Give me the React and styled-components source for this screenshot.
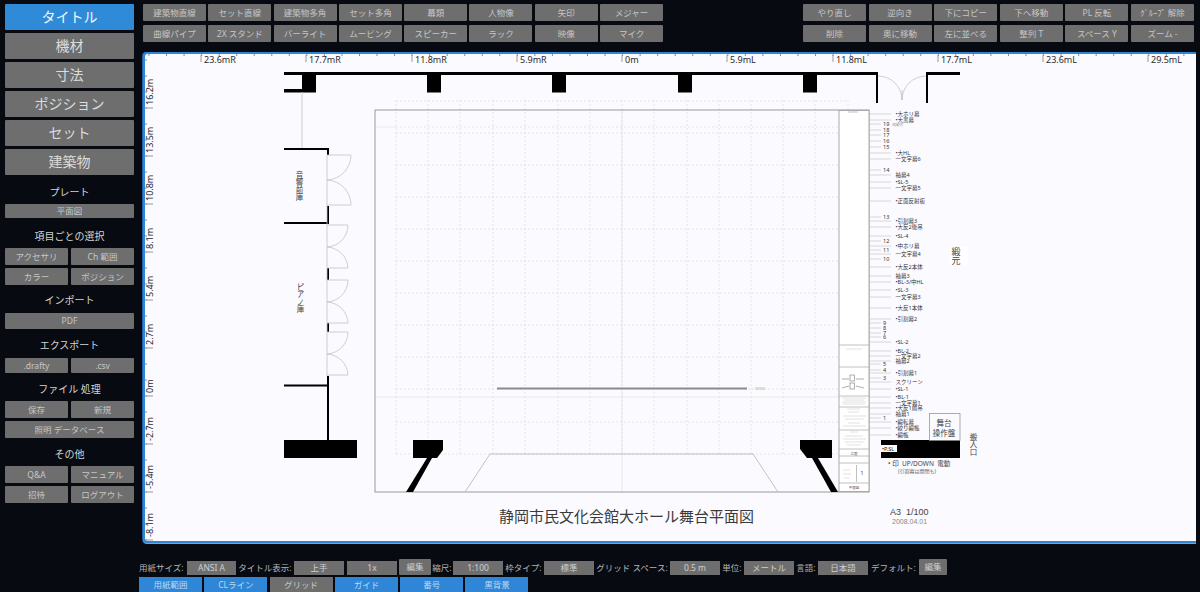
import React from 'react';
import styled, { createGlobalStyle } from 'styled-components';

const Global = createGlobalStyle`
html, body { margin: 0; padding: 0; background: #070b11; height: 100%; overflow: hidden; }
#root { height: 100%; }
* { box-sizing: border-box; }
`
const FONT = `"Noto Sans", "Noto Sans CJK JP", sans-serif`

const Page = styled.div`
width: 1200px;
height: 592px;
display: flex;
background: #070b11;
font-family: ${FONT};
color: #d8d8d8;
`
const Sidebar = styled.div`
width: 143px;
flex: none;
padding: 4px 9px 0 5px;
display: flex;
flex-direction: column;
`
const BigButton = styled.div`
height: 26px;
margin-bottom: 3px;
background: ${props => props.active ? '#2f8bd8' : '#6e6e6e'};
color: ${props => props.active ? '#f2f6fa' : '#dcdcdc'};
font-size: 14px;
line-height: 26px;
text-align: center;
border-radius: 1px;
`
const SectionTitle = styled.div`
height: ${props => props.h}px;
padding-top: ${props => props.top}px;
font-size: 10px;
line-height: 20px;
text-align: center;
color: #d4d4d4;
`
const SideRow = styled.div`
display: flex;
gap: 3px;
margin-bottom: ${props => props.mb ?? 3}px;
`
const SideButton = styled.div`
flex: ${props => props.wide ? 1 : 'none'};
width: ${props => props.wide ? 'auto' : '63px'};
height: ${props => props.h || 17}px;
background: #6e6e6e;
color: #c6c6c6;
font-size: 8.5px;
line-height: ${props => props.h || 17}px;
text-align: center;
white-space: nowrap;
border-radius: 1px;
`
const Main = styled.div`
flex: 1;
display: flex;
flex-direction: column;
min-width: 0;
`
const Toolbar = styled.div`
height: 52px;
flex: none;
padding: 4px 6px 0 0;
display: flex;
justify-content: space-between;
`
const ToolGrid = styled.div`
display: grid;
grid-template-columns: repeat(${props => props.cols}, 63px);
grid-auto-rows: 17px;
column-gap: ${props => props.gap}px;
row-gap: 4px;
`
const ToolButton = styled.div`
background: #6e6e6e;
color: #c6c6c6;
font-size: 8.5px;
line-height: 17px;
text-align: center;
white-space: nowrap;
border-radius: 1px;
`
const CanvasFrame = styled.div`
height: 491px;
flex: none;
background: #fbfaff;
border: solid #2f86d6;
border-width: 2px 0 2px 2px;
border-top-left-radius: 4px;
border-bottom-left-radius: 4px;
box-shadow: 0 1px 0 #6fa8de, -1px 0 0 #1d5fa8;
margin-right: 4px;
`
const Drawing = styled.svg`
display: block;
width: 1051px;
height: 487px;
overflow: visible;
`
const Footer = styled.div`
flex: 1;
padding-top: 16px;
display: flex;
flex-direction: column;
margin-left: -4px;
`
const FooterRow = styled.div`
display: flex;
align-items: flex-start;
height: 18px;
`
const FooterLabel = styled.span`
width: ${props => props.w}px;
flex: none;
margin-top: 2px;
font-size: 8.5px;
line-height: 14px;
color: #b4b4b4;
white-space: nowrap;
text-align: ${props => props.first ? 'left' : 'center'};
`
const SelectBox = styled.div`
width: ${props => props.w || 50}px;
height: 14px;
flex: none;
margin-top: 2px;
margin-right: ${props => props.mr || 0}px;
background: #6e6e6e;
color: #cfcfcf;
font-size: 8.5px;
line-height: 14px;
text-align: center;
`
const EditButton = styled.div`
width: ${props => props.w || 28}px;
height: 16px;
flex: none;
background: #6e6e6e;
color: #cfcfcf;
font-size: 8.5px;
line-height: 16px;
text-align: center;
border-radius: 1px;
`
const ToggleRow = styled.div`
display: flex;
gap: 2.3px;
`
const Toggle = styled.div`
width: 63px;
height: 15px;
background: ${props => props.off ? '#6e6e6e' : '#2f86d6'};
color: ${props => props.off ? '#c6c6c6' : '#bcd9f2'};
font-size: 8.5px;
line-height: 15px;
text-align: center;
`

const leftTools = ['建築物直線', 'セット直線', '建築物多角', 'セット多角', '幕類', '人物像', '矢印', 'メジャー', '曲線パイプ', '2X スタンド', 'バーライト', 'ムービング', 'スピーカー', 'ラック', '映像', 'マイク']
const rightTools = ['やり直し', '逆向き', '下にコピー', '下へ移動', 'PL 反転', 'ｸﾞﾙｰﾌﾟ 解除', '削除', '奥に移動', '左に並べる', '整列 T', 'スペース Y', 'ズーム -']
const bigButtons = ['タイトル', '機材', '寸法', 'ポジション', 'セット', '建築物']

const topMarks = [
  [201, '23.6mR'], [306, '17.7mR'], [412, '11.8mR'], [517, '5.9mR'], [622, '0m'],
  [727, '5.9mL'], [833, '11.8mL'], [938, '17.7mL'], [1043, '23.6mL'], [1148, '29.5mL'],
]
const leftMarks = [
  [108, '16.2m'], [156, '13.5m'], [204, '10.8m'], [252, '8.1m'], [300, '5.4m'],
  [348, '2.7m'], [396, '0m'], [444, '-2.7m'], [492, '-5.4m'], [540, '-8.1m'],
]
const hGrid = [101, 127, 133, 165, 197, 229, 261, 293, 325, 357, 389, 422, 454]
const vGrid = [396, 428, 460, 493, 525, 558, 590, 622, 654, 687, 719, 751, 783, 815]

// cue labels on the right of the stage
const cues = [
  [114, '•大ホリ幕'], [120, '•大黒幕'], [153, '•大HL'], [159, '一文字幕6'], [175, '袖幕4'], [182, '•SL-5'], [188, '一文字幕5'],
  [201, '•正面反射板'], [221, '•引割幕3'], [227, '•大反2後吊'], [236, '•SL-4'], [246, '•中ホリ幕'], [254, '一文字幕4'],
  [267, '•大反2本体'], [276, '袖幕3'], [282, '•BL-3/中HL'], [290, '•SL-3'], [297, '一文字幕3'], [308, '•大反1本体'], [319, '•引割幕2'],
  [342, '•SL-2'], [351, '•BL-2'], [356, '一文字幕2'], [361, '袖幕2'], [373, '•引割幕1'], [382, 'スクリーン'], [389, '•SL-1'],
  [397, '•BL-1'], [403, '一文字幕1'], [408, '•大反1前吊'], [414, '袖幕1'], [422, '•緞転幕'], [428, '•絞り緞帳'], [435, '•緞帳'],
]
const lineNumbers = [
  [124, '19'], [130, '18'], [135, '17'], [141, '16'], [147, '15'], [170, '14'], [217, '13'], [241, '12'], [250, '11'], [259, '10'],
  [323, '9'], [328, '8'], [333, '7'], [337, '6'], [364, '5'], [370, '4'], [378, '3'], [418, '1'],
]
const panelRows = [345, 367, 396, 407, 430, 449, 456, 463, 483]
const panelNotes = [
  [846, 862, 349], [842, 866, 398], [844, 864, 400], [842, 866, 402], [843, 865, 404],
  [847, 860, 409], [848, 859, 412], [843, 866, 416], [845, 864, 419], [848, 860, 423], [843, 866, 426],
  [850, 858, 432], [845, 863, 436], [843, 866, 439], [845, 864, 442], [847, 861, 445],
  [843, 850, 470], [843, 851, 474], [844, 849, 478],
]

const PlanDrawing = () => (
  <Drawing viewBox="145 54 1051 487">
    {/* rulers */}
    <g stroke="#6f8fb0" strokeWidth="1">
      {Array.from({ length: 60 }, (_, i) => 149 + i * 17.54).map(x => <line key={x} x1={x} x2={x} y1="54" y2="56" />)}
      {Array.from({ length: 31 }, (_, i) => 60 + i * 16).map(y => <line key={y} y1={y} y2={y} x1="145" x2="147" />)}
    </g>
    <g stroke="#999" strokeWidth="1">
      {topMarks.map(([x]) => <line key={x} x1={x} x2={x} y1="55" y2="62" />)}
      {leftMarks.map(([y, t]) => <line key={t} y1={y} y2={y} x1="146" x2="153" />)}
    </g>
    <g fontFamily={FONT} fontSize="9" fill="#2a2a2a">
      {topMarks.map(([x, t]) => <text key={t} x={x + 3} y="63">{t}</text>)}
      {leftMarks.map(([y, t]) => <text key={t} transform={`translate(153 ${y - 3}) rotate(-90)`}>{t}</text>)}
    </g>

    {/* stage grid */}
    <g stroke="#dadae0" strokeWidth="0.7" strokeDasharray="2 2" fill="none">
      {hGrid.map(y => <line key={y} x1="396" x2="848" y1={y} y2={y} />)}
      {vGrid.map(x => <line key={x} y1="100" y2="454" x1={x} x2={x} />)}
      <line x1="848" x2="848" y1="100" y2="110" />
    </g>
    <line x1="375" x2="839" y1="397" y2="397" stroke="#e2e2e2" strokeWidth="0.7" />
    <line x1="375" x2="396" y1="127" y2="127" stroke="#e2e2e2" strokeWidth="0.7" />
    <line x1="622" x2="622" y1="110" y2="492" stroke="#e2e2e2" strokeWidth="0.7" />
    <rect x="375" y="110" width="494" height="382" fill="none" stroke="#9a9a9a" strokeWidth="1" />
    <path d="M465 492 L490 454 L753 454 L778 492" fill="none" stroke="#b5b5b5" strokeWidth="0.8" />

    {/* walls */}
    <g fill="#000">
      <rect x="284" y="72" width="594" height="3" />
      <rect x="284" y="89" width="18" height="3.500" />
      <rect x="302" y="72" width="14" height="20.500" />
      <rect x="427" y="72" width="14" height="20.500" />
      <rect x="552" y="72" width="14" height="20.500" />
      <rect x="678" y="72" width="14" height="20.500" />
      <rect x="803" y="72" width="14" height="20.500" />
      <rect x="876" y="72" width="2" height="31" />
      <rect x="926" y="72" width="2" height="31" />
      <rect x="926" y="72" width="34" height="3" />
      <rect x="284" y="148" width="45" height="2" />
      <rect x="327" y="148" width="2" height="7" />
      <rect x="327" y="206" width="2" height="18" />
      <rect x="284" y="222" width="45" height="2" />
      <rect x="327" y="268" width="2" height="12" />
      <rect x="327" y="323" width="2" height="9" />
      <rect x="327" y="376" width="2" height="64" />
      <rect x="284" y="384.500" width="44" height="2" />
      <rect x="284" y="440" width="73" height="18" />
      <path d="M413 440 H443 V450 L437 458 H413 Z" />
      <path d="M427 458 L432 458 L413 492 L406 492 Z" />
      <path d="M800 440 H832 V458 H807 L800 449 Z" />
      <path d="M812 458 L818 458 L838 492 L831 492 Z" />
      <rect x="881" y="440" width="79" height="18" />
    </g>

    {/* doors */}
    <g fill="none" stroke="#c4c4c4" strokeWidth="0.8">
      <path d="M327 155 H351 A25 25 0 0 1 327 180 A25 25 0 0 1 351 205 H327" />
      <path d="M327 225 H348 A22 22 0 0 1 327 247 A22 22 0 0 1 348 268 H327" />
      <path d="M327 280 H348 A22 22 0 0 1 327 302 A22 22 0 0 1 348 323 H327" />
      <path d="M327 332 H348 A22 22 0 0 1 327 354 A22 22 0 0 1 348 375 H327" />
      <path d="M327 155 V376" />
      <path d="M878 76 A24 24 0 0 1 902 100 A24 24 0 0 1 926 76" />
      <line x1="302" x2="302" y1="92" y2="148" />
      <line x1="902" x2="902" y1="90" y2="100" />
      <rect x="929.500" y="413.500" width="30.500" height="27" stroke="#9a9a9a" />
    </g>

    {/* right hand title block */}
    <rect x="839" y="110.500" width="30" height="381" fill="#fff" stroke="#aaa" strokeWidth="1" />
    <g stroke="#b0b0b0" strokeWidth="0.8">
      {panelRows.map(y => <line key={y} x1="839" x2="869" y1={y} y2={y} />)}
      <line x1="856.500" x2="856.500" y1="465" y2="482" />
      <line x1="848" x2="858" y1="112" y2="112" />
    </g>
    <g stroke="#c0c0c0" strokeWidth="0.5">
      {panelNotes.map(([a, b, y]) => <line key={y} x1={a} x2={b} y1={y} y2={y} />)}
    </g>
    <g fill="none" stroke="#777" strokeWidth="0.6">
      <rect x="850" y="375" width="4.500" height="6" />
      <rect x="850" y="383" width="4.500" height="6" />
      <line x1="842" x2="849" y1="379" y2="379" />
      <line x1="856" x2="864" y1="379" y2="379" />
      <line x1="842" x2="849" y1="388" y2="386" />
      <line x1="856" x2="864" y1="386" y2="388" />
    </g>
    <g fontFamily={FONT} fill="#555">
      <text x="862" y="475" fontSize="6" textAnchor="middle">1</text>
      <text x="854" y="489" fontSize="3.500" textAnchor="middle">平面図</text>
      <text x="854" y="455" fontSize="3.500" textAnchor="middle">立面</text>
    </g>

    {/* batten lines */}
    <g stroke="#c8c8c8" strokeWidth="0.7">
      {cues.map(([y]) => <line key={y} x1="870" x2="891" y1={y} y2={y} />)}
      {lineNumbers.map(([y]) => <line key={y} x1="870" x2="881" y1={y} y2={y} />)}
    </g>
    <g fontFamily={FONT} fontSize="5.500" fill="#333">
      <text>{lineNumbers.map(([y, t]) => <tspan key={y} x="883" y={y + 2}>{t}</tspan>)}</text>
      <text>{cues.map(([y, t]) => <tspan key={y} x="895.500" y={y + 2}>{t}</tspan>)}</text>
    </g>
    <text x="892" y="126" fontFamily={FONT} fontSize="3" fill="#888">(暗幕可)</text>

    <line x1="497" x2="747" y1="388.500" y2="388.500" stroke="#8c8c8c" strokeWidth="2" />
    <text x="755" y="390" fontFamily={FONT} fontSize="3.500" fill="#aaa">00000</text>

    {/* notes */}
    <rect x="950" y="247" width="18" height="18" fill="#fff" />
    <g fontFamily={FONT} fill="#444">
      <text fontSize="7.500" x="299" y="171" style={{ writingMode: 'vertical-rl' }}>音響前庫</text>
      <text fontSize="7.500" x="300" y="283" style={{ writingMode: 'vertical-rl' }}>ピアノ庫</text>
      <text fontSize="9" x="956" y="247" style={{ writingMode: 'vertical-rl' }}>緞元</text>
      <text fontSize="7.500" x="973" y="433" style={{ writingMode: 'vertical-rl' }}>搬入口</text>
      <text fontSize="7.500" x="944" y="426" textAnchor="middle">舞台</text>
      <text fontSize="7.500" x="944" y="436" textAnchor="middle">操作盤</text>
      <text fontSize="6.500" x="888" y="466" style={{ whiteSpace: 'pre' }}>• 印  UP/DOWN  電動</text>
      <text fontSize="5" x="898" y="473" fill="#666">(引割幕は開閉も)</text>
      <text fontSize="15" x="626.500" y="522" textAnchor="middle" fill="#3a3a3a">静岡市民文化会館大ホール舞台平面図</text>
      <text fontSize="9" fontFamily="Liberation Sans, sans-serif" x="890" y="515" style={{ whiteSpace: 'pre' }}>A3  1/100</text>
      <text fontSize="7" fontFamily="Liberation Sans, sans-serif" fill="#888" x="892" y="524">2008.04.01</text>
    </g>
    <rect x="881" y="445" width="16" height="7" fill="#fbfaff" />
    <text x="882" y="450.500" fontFamily={FONT} fontSize="5.500" fill="#222">•P.SL</text>
  </Drawing>
)

const App = () => (
  <Page>
    <Global />
    <Sidebar>
      {bigButtons.map((b, i) => <BigButton key={b} active={i === 0}>{b}</BigButton>)}
      <SectionTitle h={26} top={4}>プレート</SectionTitle>
      <SideRow mb={0}><SideButton wide h={14}>平面図</SideButton></SideRow>
      <SectionTitle h={30} top={8}>項目ごとの選択</SectionTitle>
      <SideRow><SideButton>アクセサリ</SideButton><SideButton>Ch 範囲</SideButton></SideRow>
      <SideRow mb={0}><SideButton>カラー</SideButton><SideButton>ポジション</SideButton></SideRow>
      <SectionTitle h={28} top={5}>インポート</SectionTitle>
      <SideRow mb={0}><SideButton wide h={16}>PDF</SideButton></SideRow>
      <SectionTitle h={29} top={6}>エクスポート</SectionTitle>
      <SideRow mb={0}><SideButton h={15}>.drafty</SideButton><SideButton h={15}>.csv</SideButton></SideRow>
      <SectionTitle h={28} top={6}>ファイル 処理</SectionTitle>
      <SideRow><SideButton>保存</SideButton><SideButton>新規</SideButton></SideRow>
      <SideRow mb={0}><SideButton wide>照明 データベース</SideButton></SideRow>
      <SectionTitle h={28} top={6}>その他</SectionTitle>
      <SideRow><SideButton>Q&amp;A</SideButton><SideButton>マニュアル</SideButton></SideRow>
      <SideRow mb={0}><SideButton>招待</SideButton><SideButton>ログアウト</SideButton></SideRow>
    </Sidebar>
    <Main>
      <Toolbar>
        <ToolGrid cols={8} gap={2.3}>{leftTools.map(t => <ToolButton key={t}>{t}</ToolButton>)}</ToolGrid>
        <ToolGrid cols={6} gap={2.6}>{rightTools.map(t => <ToolButton key={t}>{t}</ToolButton>)}</ToolGrid>
      </Toolbar>
      <CanvasFrame><PlanDrawing /></CanvasFrame>
      <Footer>
        <FooterRow>
          <FooterLabel first w={48}>用紙サイズ:</FooterLabel>
          <SelectBox w={49}>ANSI A</SelectBox>
          <FooterLabel w={58}>タイトル表示:</FooterLabel>
          <SelectBox mr={3}>上手</SelectBox>
          <SelectBox mr={2}>1x</SelectBox>
          <EditButton w={32}>編集</EditButton>
          <FooterLabel w={22}>縮尺:</FooterLabel>
          <SelectBox>1:100</SelectBox>
          <FooterLabel w={41}>枠タイプ:</FooterLabel>
          <SelectBox>標準</SelectBox>
          <FooterLabel w={76}>グリッド スペース:</FooterLabel>
          <SelectBox>0.5 m</SelectBox>
          <FooterLabel w={24}>単位:</FooterLabel>
          <SelectBox>メートル</SelectBox>
          <FooterLabel w={24}>言語:</FooterLabel>
          <SelectBox>日本語</SelectBox>
          <FooterLabel w={51}>デフォルト:</FooterLabel>
          <EditButton>編集</EditButton>
        </FooterRow>
        <ToggleRow>
          <Toggle>用紙範囲</Toggle>
          <Toggle>CLライン</Toggle>
          <Toggle off>グリッド</Toggle>
          <Toggle>ガイド</Toggle>
          <Toggle>番号</Toggle>
          <Toggle>黒背景</Toggle>
        </ToggleRow>
      </Footer>
    </Main>
  </Page>
)

export default App
